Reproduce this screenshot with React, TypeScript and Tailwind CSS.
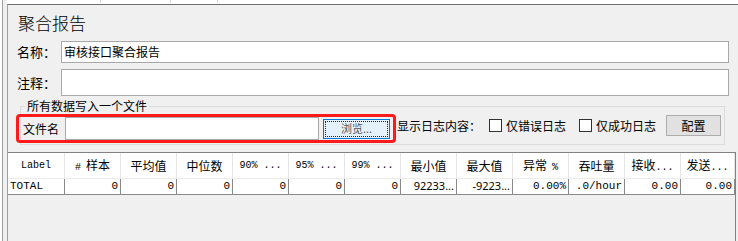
import React from 'react';

const cjk = "font-['Noto_Sans_CJK_SC','Noto_Sans',sans-serif]";
const mono = "font-['Liberation_Mono','DejaVu_Sans_Mono',monospace]";

const colWidths = [57, 56, 56, 56, 56, 56, 56, 56, 56, 56, 56, 56, 54];

const headers: React.ReactNode[] = [
  <span className={`${mono} text-[10px]`}>Label</span>,
  <span><span className={`${mono} text-[10px] mr-[5px]`}>#</span>样本</span>,
  '平均值',
  '中位数',
  <span className={`${mono} text-[10px]`}>90% ...</span>,
  <span className={`${mono} text-[10px]`}>95% ...</span>,
  <span className={`${mono} text-[10px]`}>99% ...</span>,
  '最小值',
  '最大值',
  <span>异常<span className={`${mono} text-[10px] ml-[5px]`}>%</span></span>,
  '吞吐量',
  <span>接收<span className={`${mono} text-[10px]`}>...</span></span>,
  <span>发送<span className={`${mono} text-[10px]`}>...</span></span>,
];

const row: { text: string; left?: boolean; sans?: boolean }[] = [
  { text: 'TOTAL', left: true },
  { text: '0' },
  { text: '0' },
  { text: '0' },
  { text: '0' },
  { text: '0' },
  { text: '0' },
  { text: '92233...', sans: true },
  { text: '-9223...', sans: true },
  { text: '0.00%' },
  { text: '.0/hour' },
  { text: '0.00' },
  { text: '0.00' },
];

const Checkbox: React.FC = () => (
  <span className="w-[13px] h-[13px] border border-[#333333] bg-white shrink-0" />
);

const App: React.FC = () => {
  return (
    <div className={`w-[738px] h-[241px] bg-white flex overflow-hidden text-black ${cjk}`}>
      <div className="w-[2px] bg-white" />
      <div className="w-[1px] bg-[#a0a0a0]" />
      <div className="w-[4px] bg-[#f0f0f0]" />

      <div className="flex-1 flex flex-col">
        {/* column resize ticks above the panel */}
        <div className="h-[4px] bg-white relative">
          <span className="absolute left-[93px] top-0 w-[1px] h-[3px] bg-[#d4d4d4]" />
          <span className="absolute left-[163px] top-0 w-[1px] h-[3px] bg-[#d4d4d4]" />
          <span className="absolute left-[210px] top-0 w-[1px] h-[3px] bg-[#d4d4d4]" />
        </div>

        <div className="flex-1 flex flex-col bg-[#f0f0f0] border-t border-l border-t-[#6e6e6e] border-l-[#a0a0a0]">
          <div className="pl-[10px] mt-[6px] text-[17px] leading-[24px] font-light">聚合报告</div>

          <div className="flex items-center pl-[9px] pr-[9px] mt-[6px]">
            <span className="w-[44px] text-[13px]">名称：</span>
            <div className="flex-1 h-[22px] bg-white border border-[#a9a9a9] flex items-center pl-[2px] text-[12px]">
              审核接口聚合报告
            </div>
          </div>

          <div className="flex items-center pl-[9px] pr-[9px] mt-[6px]">
            <span className="w-[44px] text-[13px]">注释：</span>
            <div className="flex-1 h-[27px] bg-white border border-[#a9a9a9]" />
          </div>

          <div className="relative ml-[12px] mr-[13px] mt-[10px] border border-[#dcdcdc] flex items-center text-[12px]">
            <span className="absolute left-[4px] -top-[9px] px-[2px] bg-[#f0f0f0] leading-[16px]">所有数据写入一个文件</span>

            <div className="-ml-[5px] mt-[7px] mb-[1px] w-[380px] h-[29px] border-[3px] border-[#ff1a1a] rounded-[4px] flex items-center">
              <span className="pl-[4px] mr-[6px]">文件名</span>
              <div className="w-[254px] h-[23px] bg-white border border-[#a9a9a9]" />
              <div className="ml-[4px] w-[67px] h-[20px] bg-[#e5f1fb] border border-[#0078d7] p-[1px]">
                <div className="w-full h-full border border-dotted border-[#222222] flex items-center justify-center text-[11px] text-[#555555] leading-none">
                  浏览...
                </div>
              </div>
            </div>

            <span className="ml-[1px]">显示日志内容：</span>
            <span className="ml-[8px] flex"><Checkbox /></span>
            <span className="ml-[4px]">仅错误日志</span>
            <span className="ml-[13px] flex"><Checkbox /></span>
            <span className="ml-[4px]">仅成功日志</span>
            <div className="ml-[10px] w-[55px] h-[21px] bg-[#e1e1e1] border border-[#adadad] flex items-center justify-center">
              配置
            </div>
          </div>

          <div className="flex-1 mt-[7px] mr-[2px] border-t border-r border-[#828282] bg-[#f0f0f0]">
            <div className="flex h-[25px] bg-white text-[12px]">
              {headers.map((h, i) => (
                <div
                  key={i}
                  style={{ width: colWidths[i] }}
                  className="shrink-0 border-r border-[#e5e5e5] flex items-center justify-center whitespace-nowrap overflow-hidden"
                >
                  {h}
                </div>
              ))}
            </div>
            <div className="flex h-[17px] bg-white border-t border-[#ececec] border-b border-b-[#8a8a8a] text-[11px]">
              {row.map((c, i) => (
                <div
                  key={i}
                  style={{ width: colWidths[i] }}
                  className={`shrink-0 border-r border-[#8a8a8a] flex items-center whitespace-nowrap overflow-hidden ${
                    c.left ? 'justify-start pl-[2px]' : 'justify-end pr-[2px]'
                  } ${c.sans ? "font-['Noto_Sans',sans-serif] text-[11px]" : mono}`}
                >
                  {c.text}
                </div>
              ))}
            </div>
          </div>
        </div>
      </div>
    </div>
  );
};

export default App;
